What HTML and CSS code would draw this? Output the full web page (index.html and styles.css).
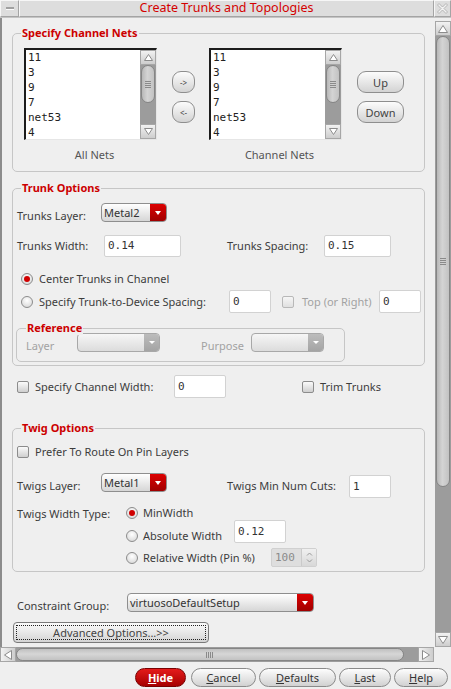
FILE: index.html
```html
<!DOCTYPE html>
<html>
<head>
<meta charset="utf-8">
<title>Create Trunks and Topologies</title>
<link rel="stylesheet" href="styles.css">
</head>
<body>
<div class="window">
  <div class="titlebar">
    <div class="tb-btn tb-min"><span class="dash"></span></div>
    <div class="tb-title">Create Trunks and Topologies</div>
    <div class="tb-btn tb-close">
      <svg width="11" height="11" viewBox="0 0 11 11"><polygon points="0.5,2 2,0.5 5.5,4 9,0.5 10.5,2 7,5.5 10.5,9 9,10.5 5.5,7 2,10.5 0.5,9 4,5.5" fill="#f2f2f2" stroke="#b4b4b4" stroke-width="1"/></svg>
    </div>
  </div>

  <div class="main">
    <div class="content">

      <div class="group g-nets">
        <div class="group-title">Specify Channel Nets</div>
        <div class="nets-row">
          <div class="net-col">
            <div class="listbox">
              <div class="list-items">
                <div>11</div><div>3</div><div>9</div><div>7</div><div>net53</div><div>4</div>
              </div>
              <div class="list-scroll">
                <div class="sb-arrow"><svg width="9" height="7" viewBox="0 0 9 7"><polygon points="4.5,0.5 8.5,6.5 0.5,6.5" fill="#fff" stroke="#8c8c8c"/></svg></div>
                <div class="sb-thumb list-thumb"><span class="grip-h"></span></div>
                <div class="sb-trough"></div>
                <div class="sb-arrow"><svg width="9" height="7" viewBox="0 0 9 7"><polygon points="0.5,0.5 8.5,0.5 4.5,6.5" fill="#fff" stroke="#8c8c8c"/></svg></div>
              </div>
            </div>
            <div class="net-label">All Nets</div>
          </div>
          <div class="btn-col arrows">
            <div class="pill">-&gt;</div>
            <div class="pill">&lt;-</div>
          </div>
          <div class="net-col">
            <div class="listbox">
              <div class="list-items">
                <div>11</div><div>3</div><div>9</div><div>7</div><div>net53</div><div>4</div>
              </div>
              <div class="list-scroll">
                <div class="sb-arrow"><svg width="9" height="7" viewBox="0 0 9 7"><polygon points="4.5,0.5 8.5,6.5 0.5,6.5" fill="#fff" stroke="#8c8c8c"/></svg></div>
                <div class="sb-thumb list-thumb"><span class="grip-h"></span></div>
                <div class="sb-trough"></div>
                <div class="sb-arrow"><svg width="9" height="7" viewBox="0 0 9 7"><polygon points="0.5,0.5 8.5,0.5 4.5,6.5" fill="#fff" stroke="#8c8c8c"/></svg></div>
              </div>
            </div>
            <div class="net-label">Channel Nets</div>
          </div>
          <div class="btn-col updown">
            <div class="pill">Up</div>
            <div class="pill">Down</div>
          </div>
        </div>
      </div>

      <div class="group g-trunk">
        <div class="group-title">Trunk Options</div>
        <div class="row r-tlayer">
          <span class="lbl lab-layer">Trunks Layer:</span>
          <div class="combo c-metal"><span class="combo-text">Metal2</span><span class="combo-btn"></span></div>
        </div>
        <div class="row r-twidth">
          <span class="lbl lab-twidth">Trunks Width:</span>
          <div class="field f-tw">0.14</div>
          <span class="lbl lab-tspacing">Trunks Spacing:</span>
          <div class="field f-ts">0.15</div>
        </div>
        <div class="row r-center">
          <span class="radio on"></span>
          <span class="lbl lab-opt">Center Trunks in Channel</span>
        </div>
        <div class="row r-spec">
          <span class="radio"></span>
          <span class="lbl lab-opt lab-spec">Specify Trunk-to-Device Spacing:</span>
          <div class="field f-small">0</div>
          <span class="check dis chk-top"></span>
          <span class="lbl dis lab-top">Top (or Right)</span>
          <div class="field f-small">0</div>
        </div>
        <div class="group sub">
          <div class="group-title sub-title">Reference</div>
          <div class="row">
            <span class="lbl dis lab-rlayer">Layer</span>
            <div class="combo dis c-rlayer"><span class="combo-text"></span><span class="combo-btn"></span></div>
            <span class="lbl dis lab-purpose">Purpose</span>
            <div class="combo dis c-purpose"><span class="combo-text"></span><span class="combo-btn"></span></div>
          </div>
        </div>
      </div>

      <div class="row r-cw">
        <span class="check"></span>
        <span class="lbl lab-cw">Specify Channel Width:</span>
        <div class="field f-cw">0</div>
        <span class="check chk-trim"></span>
        <span class="lbl lab-trim">Trim Trunks</span>
      </div>

      <div class="group g-twig">
        <div class="group-title">Twig Options</div>
        <div class="row r-prefer">
          <span class="check"></span>
          <span class="lbl lab-prefer">Prefer To Route On Pin Layers</span>
        </div>
        <div class="row r-twlayer">
          <span class="lbl lab-layer">Twigs Layer:</span>
          <div class="combo c-metal"><span class="combo-text">Metal1</span><span class="combo-btn"></span></div>
          <span class="lbl lab-cuts">Twigs Min Num Cuts:</span>
          <div class="field f-cuts">1</div>
        </div>
        <div class="row r-wtype">
          <span class="lbl lab-wtype">Twigs Width Type:</span>
          <div class="opts">
            <div class="opt opt1">
              <span class="radio on"></span>
              <span class="lbl lab-o">MinWidth</span>
            </div>
            <div class="opt opt2">
              <span class="radio"></span>
              <span class="lbl lab-o lab-abs">Absolute Width</span>
              <div class="field f-abs">0.12</div>
            </div>
            <div class="opt opt3">
              <span class="radio"></span>
              <span class="lbl lab-o lab-rel">Relative Width (Pin %)</span>
              <div class="spin">
                <span class="spin-text">100</span>
                <span class="spin-btn">
                  <svg width="7" height="13" viewBox="0 0 7 13"><polyline points="1,4.5 3.5,2 6,4.5" fill="none" stroke="#9a9a9a"/><polyline points="1,8.5 3.5,11 6,8.5" fill="none" stroke="#9a9a9a"/></svg>
                </span>
              </div>
            </div>
          </div>
        </div>
      </div>

      <div class="row r-cg">
        <span class="lbl lab-cg">Constraint Group:</span>
        <div class="combo c-cg"><span class="combo-text">virtuosoDefaultSetup</span><span class="combo-btn"></span></div>
      </div>

      <div class="adv"><span class="adv-inner">Advanced Options...&gt;&gt;</span></div>
    </div>

    <div class="vscroll">
      <div class="sb-arrow"><svg width="10" height="8" viewBox="0 0 10 8"><polygon points="5,0.5 9.5,7.5 0.5,7.5" fill="#fff" stroke="#8c8c8c"/></svg></div>
      <div class="sb-thumb v-thumb"><span class="grip-h"></span></div>
      <div class="sb-trough"></div>
      <div class="sb-arrow"><svg width="10" height="8" viewBox="0 0 10 8"><polygon points="0.5,0.5 9.5,0.5 5,7.5" fill="#fff" stroke="#8c8c8c"/></svg></div>
    </div>
  </div>

  <div class="hscroll">
    <div class="sb-arrow h-arrow"><svg width="8" height="10" viewBox="0 0 8 10"><polygon points="0.5,5 7.5,0.5 7.5,9.5" fill="#fff" stroke="#8c8c8c"/></svg></div>
    <div class="sb-thumb h-thumb"><span class="grip-v"></span></div>
    <div class="h-trough"></div>
    <div class="sb-arrow h-arrow"><svg width="8" height="10" viewBox="0 0 8 10"><polygon points="0.5,0.5 7.5,5 0.5,9.5" fill="#fff" stroke="#8c8c8c"/></svg></div>
  </div>

  <div class="buttons">
    <div class="bbtn b-hide"><span><u>H</u>ide</span></div>
    <div class="bbtn b-cancel"><span><u>C</u>ancel</span></div>
    <div class="bbtn b-defaults"><span><u>D</u>efaults</span></div>
    <div class="bbtn b-last"><span><u>L</u>ast</span></div>
    <div class="bbtn b-help"><span><u>H</u>elp</span></div>
  </div>
</div>
</body>
</html>
```

FILE: styles.css
```css
* { box-sizing: border-box; }
html, body { margin: 0; padding: 0; }
body {
  width: 451px; height: 689px; overflow: hidden;
  background: #efefef;
  font-family: "Noto Sans", "DejaVu Sans", sans-serif;
  font-size: 11px;
  color: #3c3c3c;
}
.window { width: 451px; height: 689px; display: flex; flex-direction: column; }

/* title bar */
.titlebar { height: 18px; display: flex; background: #dddddd; border-bottom: 1px solid #c4c4c4; flex: none; }
.tb-btn {
  width: 19px; height: 17px; flex: none;
  border: 1px solid; border-color: #f6f6f6 #a4a4a4 #a4a4a4 #f6f6f6;
  display: flex; align-items: center; justify-content: center;
}
.tb-close { width: 17px; }
.dash { width: 8px; height: 3px; background: #a0a0a0; border-bottom: 1px solid #fafafa; }
.tb-title {
  flex: 1; height: 17px; text-align: center;
  color: #d40000; font-size: 12.5px; line-height: 14px;
  border: 1px solid; border-color: #f6f6f6 #a4a4a4 #a4a4a4 #f6f6f6;
}

/* main area */
.main { height: 629px; display: flex; border-left: 2px solid #8c8c8c; flex: none; }
.content { flex: 1; overflow: hidden; }

/* group boxes */
.group { position: relative; border: 1px solid #c6c6c6; border-radius: 5px; margin: 0 10px; }
.group-title {
  position: absolute; top: -8px; left: 8px; padding: 0 1px;
  background: #efefef; color: #cc0000; font-weight: bold; line-height: 14px; white-space: nowrap;
}
.sub-title { left: 9px; }

.row { display: flex; align-items: flex-start; }
.lbl { line-height: 14px; white-space: nowrap; flex: none; }
.dis { color: #a2a2a2; }

/* nets group */
.g-nets { margin-top: 15px; padding: 14px 0 9px 11px; }
.nets-row { display: flex; align-items: flex-start; }
.net-col { display: flex; flex-direction: column; width: 133px; }
.listbox {
  width: 133px; height: 92px; display: flex; background: #fff;
  border-style: solid; border-width: 2px 1px 1px 2px;
  border-color: #1c1c1c #e6e6e6 #e6e6e6 #1c1c1c;
}
.list-items {
  flex: 1; padding-left: 2px; overflow: hidden;
  font-family: "DejaVu Sans Mono", monospace; font-size: 11px; line-height: 15px; color: #222;
}
.list-scroll { width: 16px; display: flex; flex-direction: column; background: #9c9c9c; }
.net-label { margin-top: 8px; line-height: 14px; text-align: center; padding-left: 8px; color: #555; }

.btn-col { display: flex; flex-direction: column; gap: 8px; margin-top: 23px; }
.arrows { margin-left: 15px; margin-right: 14px; }
.updown { margin-left: 15px; }
.pill {
  height: 22px; border: 1px solid #8e8e8e; border-radius: 9px;
  background: linear-gradient(#fcfcfc, #d3d3d3);
  display: flex; align-items: center; justify-content: center; color: #444;
}
.arrows .pill { width: 23px; font-size: 8px; }
.updown .pill { width: 47px; font-size: 11px; }

/* scrollbar parts */
.sb-arrow {
  height: 15px; flex: none;
  background: linear-gradient(#f2f2f2, #cdcdcd);
  border: 1px solid #a6a6a6;
  display: flex; align-items: center; justify-content: center;
}
.sb-thumb {
  margin: 0 1px; flex: none;
  background: linear-gradient(90deg, #b8b8b8, #d4d4d4 45%, #c2c2c2);
  border: 1px solid #858585; border-radius: 7px;
  display: flex; align-items: center; justify-content: center;
}
.list-thumb { height: 38px; }
.sb-trough { flex: 1; }
.grip-h { width: 6px; height: 7px; background: repeating-linear-gradient(#8a8a8a 0 1px, transparent 1px 2px); }
.grip-v { width: 8px; height: 6px; background: repeating-linear-gradient(90deg, #8a8a8a 0 1px, transparent 1px 2px); }

.vscroll { width: 16px; margin-top: 3px; display: flex; flex-direction: column; background: #9c9c9c; flex: none; }
.v-thumb { height: 451px; }

.hscroll { width: 434px; height: 15px; display: flex; background: #9c9c9c; flex: none; }
.h-arrow { width: 16px; height: 15px; background: linear-gradient(90deg, #f2f2f2, #cdcdcd); }
.h-thumb {
  flex: 1; margin: 1px 0;
  background: linear-gradient(#c0c0c0, #d6d6d6 45%, #c2c2c2);
}
.h-trough { width: 14px; flex: none; }

/* form widgets */
.combo {
  height: 19px; display: flex; flex: none;
  border: 1px solid #8e8e8e; border-radius: 4px; overflow: hidden;
  background: linear-gradient(#ffffff, #d6d6d6);
}
.combo-text { flex: 1; padding-left: 2px; line-height: 17px; color: #333; white-space: nowrap; }
.combo-btn {
  width: 16px; flex: none;
  background: linear-gradient(#dc0000, #a00000);
  display: flex; align-items: center; justify-content: center;
}
.combo-btn::after {
  content: ""; border-left: 3.5px solid transparent; border-right: 3.5px solid transparent;
  border-top: 4px solid #fff;
}
.combo.dis { border-color: #a8a8a8; background: linear-gradient(#f6f6f6, #dcdcdc); }
.combo.dis .combo-btn { width: 15px; background: linear-gradient(#bcbcbc, #a4a4a4); }
.combo.dis .combo-btn::after { border-left-width: 3px; border-right-width: 3px; border-top-width: 3px; }

.field {
  height: 22px; flex: none; background: #fff;
  border: 1px solid #d2d2d2; border-radius: 2px; padding-left: 3px;
  font-family: "DejaVu Sans Mono", monospace; font-size: 11px; line-height: 20px; color: #333;
}
.radio {
  width: 12px; height: 12px; flex: none; border-radius: 50%;
  border: 1px solid #8c8c8c;
  background: radial-gradient(circle at 50% 35%, #ffffff, #d2d2d2);
  display: flex; align-items: center; justify-content: center;
}
.radio.on::after { content: ""; width: 6px; height: 6px; border-radius: 50%; background: #d00000; }
.check {
  width: 12px; height: 12px; flex: none;
  border: 1px solid #8c8c8c; border-radius: 2px;
  background: linear-gradient(#fbfbfb, #cfcfcf);
}
.check.dis { border-color: #b8b8b8; background: linear-gradient(#f6f6f6, #e0e0e0); }

/* trunk options */
.g-trunk { margin-top: 16px; padding: 14px 0 3px 0; }
.g-trunk > .row { margin-left: 4px; }
.lab-layer { width: 84px; margin-top: 6px; }
.c-metal { width: 66px; }
.r-twidth { margin-top: 12px; }
.lab-twidth { width: 87px; margin-top: 4px; }
.f-tw { width: 77px; }
.lab-tspacing { width: 97px; margin-left: 46px; margin-top: 4px; }
.f-ts { width: 67px; }
.g-trunk > .r-center { margin-top: 15px; margin-left: 8px; height: 14px; align-items: center; }
.lab-opt { margin-left: 6px; }
.g-trunk > .r-spec { margin-top: 4px; margin-left: 8px; height: 23px; align-items: center; }
.lab-spec { width: 190px; }
.f-small { width: 42px; height: 23px; line-height: 21px; }
.chk-top { margin-left: 11px; }
.lab-top { width: 77px; margin-left: 8px; }

.sub { margin: 15px 0 0 3px; width: 329px; padding: 4px 0 8px 9px; }
.lab-rlayer { width: 51px; margin-top: 6px; }
.c-rlayer { width: 83px; }
.lab-purpose { width: 50px; margin-left: 41px; margin-top: 6px; }
.c-purpose { width: 73px; }

/* channel width row */
.r-cw { margin-top: 9px; padding-left: 15px; height: 23px; align-items: center; }
.lab-cw { width: 139px; margin-left: 6px; }
.f-cw { width: 52px; height: 23px; line-height: 21px; }
.chk-trim { margin-left: 76px; }
.lab-trim { margin-left: 6px; }

/* twig options */
.g-twig { margin-top: 30px; padding: 16px 0 4px 0; }
.g-twig > .row { margin-left: 4px; }
.r-prefer { height: 14px; align-items: center; }
.lab-prefer { margin-left: 6px; }
.r-twlayer { margin-top: 14px; }
.lab-cuts { width: 122px; margin-left: 60px; margin-top: 6px; }
.f-cuts { width: 42px; height: 23px; line-height: 21px; margin-top: 2px; }
.r-wtype { margin-top: 8px; }
.lab-wtype { width: 109px; margin-top: 1px; }
.opts { display: flex; flex-direction: column; }
.opt { display: flex; }
.opt1 { height: 14px; align-items: center; }
.opt2 { height: 23px; align-items: flex-end; }
.opt2 .radio { margin-bottom: 1px; }
.opt3 { height: 19px; margin-top: 5px; align-items: center; }
.lab-o { margin-left: 5px; }
.lab-abs { width: 91px; }
.f-abs { width: 52px; height: 23px; line-height: 21px; }
.lab-rel { width: 128px; }
.spin {
  width: 46px; height: 19px; display: flex; flex: none;
  background: #dedede; border: 1px solid #d0d0d0; border-radius: 2px;
}
.spin-text {
  flex: 1; padding-left: 3px; line-height: 17px;
  font-family: "DejaVu Sans Mono", monospace; font-size: 11px; color: #8a8a8a;
}
.spin-btn {
  width: 15px; display: flex; align-items: center; justify-content: center;
  background: linear-gradient(#f0f0f0, #d8d8d8); border-left: 1px solid #cacaca;
}

/* constraint group */
.r-cg { margin-top: 21px; padding-left: 15px; }
.lab-cg { width: 110px; margin-top: 6px; }
.c-cg { width: 187px; }

.adv {
  margin: 9px 0 0 11px; width: 196px; height: 21px; padding: 2px;
  border: 1px solid #7a7a7a; border-radius: 4px;
  background: linear-gradient(#fbfbfb, #d4d4d4);
}
.adv-inner {
  display: block; height: 15px; border: 1px dotted #222;
  text-align: center; line-height: 13px; color: #444; font-size: 11px;
}

/* bottom buttons */
.buttons {
  flex: 1; display: flex; justify-content: flex-end; align-items: flex-start;
  padding: 6px 3px 0 0; gap: 3px;
}
.bbtn {
  height: 19px; flex: none;
  border: 1px solid #8a8a8a; border-radius: 10px;
  background: linear-gradient(#fdfdfd, #d1d1d1);
  display: flex; align-items: center; justify-content: center;
  color: #333; font-size: 11px; line-height: 14px;
}
.b-hide {
  width: 51px; margin-right: 2px;
  background: linear-gradient(#e41b1b, #a60000); border-color: #780000;
  color: #fff; font-weight: bold;
}
.b-cancel { width: 65px; }
.b-defaults { width: 77px; }
.b-last { width: 52px; }
.b-help { width: 54px; }
```
